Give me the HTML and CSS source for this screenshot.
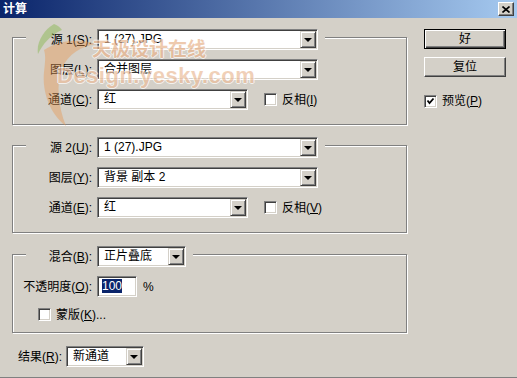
FILE: index.html
```html
<!DOCTYPE html>
<html lang="zh-CN">
<head>
    <meta charset="UTF-8">
    <title>计算</title>
    <link rel="stylesheet" href="styles.css">
</head>
<body>
    <div class="window">
        <div class="titlebar">
            <span class="title">计算</span>
            <span class="close">
                <svg width="8" height="7" viewBox="0 0 8 7"><path d="M0.5 0.5 L7.5 6.5 M7.5 0.5 L0.5 6.5" stroke="#000" stroke-width="1.6"/></svg>
            </span>
        </div>

        <div class="client">
            <div class="main">
                <!-- source 1 -->
                <div class="group">
                    <div class="row head">
                        <span class="lbl">源 1(<u>S</u>):</span>
                        <div class="combo wide"><span class="val">1 (27).JPG</span><span class="drop"><i class="arrow"></i></span></div>
                    </div>
                    <div class="row">
                        <span class="lbl">图层(<u>L</u>):</span>
                        <div class="combo wide"><span class="val">合并图层</span><span class="drop"><i class="arrow"></i></span></div>
                    </div>
                    <div class="row">
                        <span class="lbl">通道(<u>C</u>):</span>
                        <div class="combo mid"><span class="val">红</span><span class="drop"><i class="arrow"></i></span></div>
                        <span class="check-wrap"><span class="check"></span>反相(<u>I</u>)</span>
                    </div>
                </div>

                <!-- source 2 -->
                <div class="group">
                    <div class="row head">
                        <span class="lbl">源 2(<u>U</u>):</span>
                        <div class="combo wide"><span class="val">1 (27).JPG</span><span class="drop"><i class="arrow"></i></span></div>
                    </div>
                    <div class="row">
                        <span class="lbl">图层(<u>Y</u>):</span>
                        <div class="combo wide"><span class="val">背景 副本 2</span><span class="drop"><i class="arrow"></i></span></div>
                    </div>
                    <div class="row">
                        <span class="lbl">通道(<u>E</u>):</span>
                        <div class="combo mid"><span class="val">红</span><span class="drop"><i class="arrow"></i></span></div>
                        <span class="check-wrap"><span class="check"></span>反相(<u>V</u>)</span>
                    </div>
                </div>

                <!-- blending -->
                <div class="group blend">
                    <div class="row head">
                        <span class="lbl">混合(<u>B</u>):</span>
                        <div class="combo small"><span class="val">正片叠底</span><span class="drop"><i class="arrow"></i></span></div>
                    </div>
                    <div class="row">
                        <span class="lbl">不透明度(<u>O</u>):</span>
                        <div class="field"><span class="sel">100</span></div>
                        <span class="unit">%</span>
                    </div>
                    <div class="row mask">
                        <span class="check"></span>蒙版(<u>K</u>)...
                    </div>
                </div>

                <div class="row result">
                    <span class="res-lbl">结果(<u>R</u>):</span>
                    <div class="combo res"><span class="val">新通道</span><span class="drop"><i class="arrow"></i></span></div>
                </div>
            </div>

            <div class="side">
                <div class="btn default">好</div>
                <div class="btn">复位</div>
                <div class="check-wrap preview">
                    <span class="check">
                        <svg width="9" height="9" viewBox="0 0 9 9"><path d="M1.5 3.5 L3.5 6 L7.5 1.5" fill="none" stroke="#000" stroke-width="1.8"/></svg>
                    </span>预览(<u>P</u>)
                </div>
            </div>
        </div>

        <!-- watermark of the source site -->
        <div class="watermark">
            <svg class="wm-logo" width="70" height="110" viewBox="0 0 70 110">
                <path d="M20 2 C10 8 2 20 4 32 C9 22 16 13 28 8 C26 5 23 3 20 2 Z" fill="#7fb640"/>
                <path d="M10 28 C24 18 46 16 62 22 C48 24 34 32 28 46 C22 62 24 84 32 104 C16 92 8 70 10 50 C11 42 12 34 10 28 Z" fill="#e89a55"/>
            </svg>
            <span class="wm-cn">天极设计在线</span>
            <span class="wm-en">Design.yesky.com</span>
        </div>
    </div>
</body>
</html>
```

FILE: styles.css
```css
body {
    margin: 0;
    font-family: "Liberation Sans", "Noto Sans CJK SC", sans-serif;
    font-size: 12px;
    line-height: 14px;
    background: #d4d0c8;
    color: #000;
}

.window {
    position: relative;
    width: 517px;
    height: 378px;
    box-sizing: border-box;
    background: #d4d0c8;
    border-bottom: 1px solid #808080;
    overflow: hidden;
}

/* title bar */
.titlebar {
    height: 18px;
    display: flex;
    align-items: center;
    justify-content: space-between;
    padding: 0 3px;
    background: linear-gradient(to right, #0a246a, #a6caf0);
}

.title {
    color: #fff;
    font-weight: bold;
}

.close {
    width: 16px;
    height: 14px;
    box-sizing: border-box;
    display: flex;
    align-items: center;
    justify-content: center;
    background: #d4d0c8;
    border: 1px solid;
    border-color: #fff #404040 #404040 #fff;
    box-shadow: inset -1px -1px 0 #808080;
}

.client {
    display: flex;
}

.main {
    padding: 19px 0 0 12px;
    width: 395px;
}

/* etched group box */
.group {
    border: 1px solid #808080;
    box-shadow: inset 1px 1px 0 #fff, 1px 1px 0 #fff;
    padding: 0 0 14px 13px;
}

.group + .group {
    margin-top: 20px;
}

.row {
    display: flex;
    align-items: center;
    height: 21px;
    margin-top: 9px;
}

.row.head {
    margin-top: -9px;
    width: fit-content;
    padding-right: 7px;
    background: #d4d0c8;
}

.lbl {
    width: 66px;
    margin-right: 5px;
    display: flex;
    justify-content: flex-end;
    white-space: nowrap;
}

/* combo boxes */
.combo {
    height: 21px;
    box-sizing: border-box;
    display: flex;
    padding: 1px;
    background: #fff;
    border: 1px solid;
    border-color: #808080 #fff #fff #808080;
    box-shadow: inset 1px 1px 0 #404040, inset -1px -1px 0 #d4d0c8;
}

.combo.wide { width: 221px; }
.combo.mid { width: 151px; }
.combo.small { width: 89px; }
.combo.res { width: 78px; }

.val {
    flex: 1;
    padding-left: 5px;
    line-height: 17px;
    white-space: nowrap;
}

.drop {
    width: 16px;
    height: 17px;
    box-sizing: border-box;
    display: flex;
    align-items: center;
    justify-content: center;
    background: #d4d0c8;
    border: 1px solid;
    border-color: #d4d0c8 #404040 #404040 #d4d0c8;
    box-shadow: inset 1px 1px 0 #fff, inset -1px -1px 0 #808080;
}

.arrow {
    width: 0;
    height: 0;
    border-left: 4px solid transparent;
    border-right: 4px solid transparent;
    border-top: 4px solid #000;
    margin-top: 1px;
}

/* check boxes */
.check {
    width: 13px;
    height: 13px;
    box-sizing: border-box;
    display: inline-flex;
    align-items: center;
    justify-content: center;
    margin-right: 5px;
    background: #fff;
    border: 1px solid;
    border-color: #808080 #fff #fff #808080;
    box-shadow: inset 1px 1px 0 #404040, inset -1px -1px 0 #d4d0c8;
}

.check-wrap {
    display: flex;
    align-items: center;
    margin-left: 16px;
}

/* blending group */
.group.blend {
    margin-top: 21px;
    padding-bottom: 11px;
}

.field {
    width: 40px;
    height: 21px;
    box-sizing: border-box;
    padding: 2px 0 0 4px;
    background: #fff;
    border: 1px solid;
    border-color: #808080 #fff #fff #808080;
    box-shadow: inset 1px 1px 0 #404040, inset -1px -1px 0 #d4d0c8;
}

.sel {
    background: #0a246a;
    color: #fff;
}

.unit {
    margin-left: 6px;
}

.row.mask {
    height: 13px;
    margin: 11px 0 0 12px;
}

.row.result {
    margin: 13px 0 0 6px;
}

.res-lbl {
    margin-right: 4px;
}

/* right column */
.side {
    margin-left: 17px;
    padding-top: 11px;
    display: flex;
    flex-direction: column;
}

.btn {
    width: 82px;
    height: 20px;
    box-sizing: border-box;
    display: flex;
    align-items: center;
    justify-content: center;
    margin-bottom: 8px;
    border: 1px solid;
    border-color: #fff #404040 #404040 #fff;
    box-shadow: inset -1px -1px 0 #808080;
}

.btn.default {
    border-color: #000;
    box-shadow: inset 1px 1px 0 #fff, inset -1px -1px 0 #404040, inset -2px -2px 0 #808080;
}

.check-wrap.preview {
    margin: 9px 0 0 0;
}

/* watermark */
.watermark {
    position: absolute;
    left: 0;
    top: 0;
    width: 260px;
    height: 130px;
    pointer-events: none;
    opacity: 0.7;
}

.wm-logo {
    position: absolute;
    left: 34px;
    top: 22px;
    opacity: 0.6;
}

.wm-cn {
    position: absolute;
    left: 92px;
    top: 39px;
    font-size: 19px;
    line-height: 22px;
    font-weight: bold;
    color: rgba(226, 160, 110, 0.8);
    text-shadow: 1px 0 #fff, -1px 0 #fff, 0 1px #fff, 0 -1px #fff;
}

.wm-en {
    position: absolute;
    left: 57px;
    top: 63px;
    font-size: 22px;
    line-height: 26px;
    font-weight: bold;
    letter-spacing: 0.5px;
    color: rgba(226, 160, 110, 0.7);
    text-shadow: 1px 0 #fff, -1px 0 #fff, 0 1px #fff, 0 -1px #fff;
}
```
